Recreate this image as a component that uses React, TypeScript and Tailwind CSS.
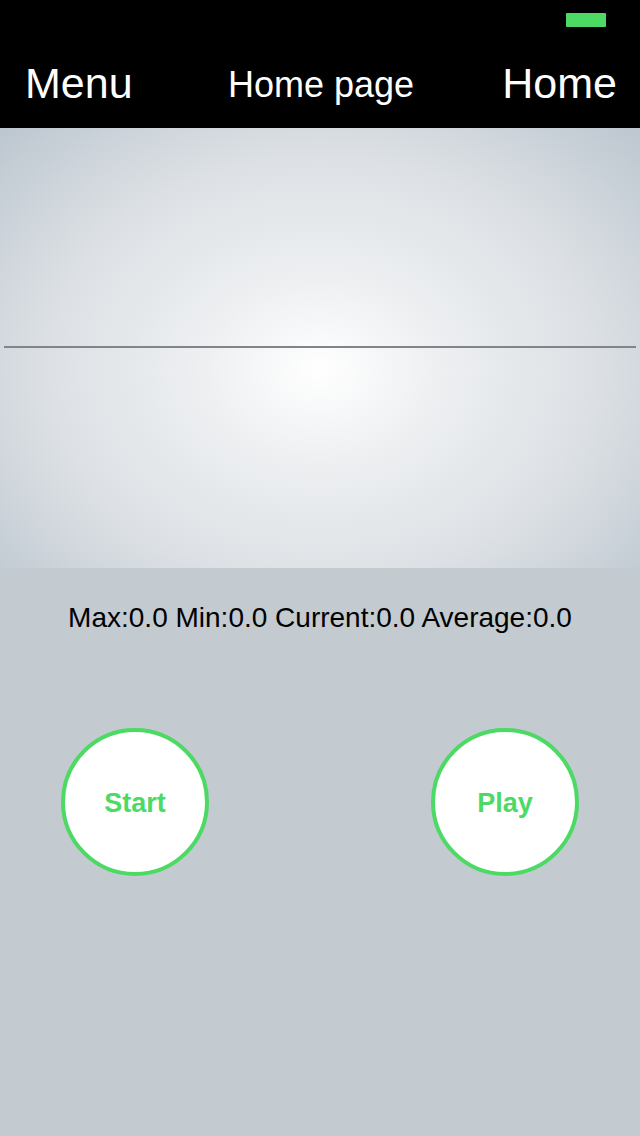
import React from 'react';

const font = { fontFamily: '"Liberation Sans", Arial, sans-serif' };

const CircleButton: React.FC<{ label: string }> = ({ label }) => (
  <button className="w-[148px] h-[148px] rounded-full bg-white border-[4px] border-[#4cd964] flex items-center justify-center text-[27px] font-bold text-[#4cd964] pt-[2px]">
    {label}
  </button>
);

export default function App() {
  return (
    <div className="w-[640px] h-[1136px] flex flex-col bg-[#c3cad0] overflow-hidden" style={font}>
      {/* status + nav bar */}
      <div className="h-[128px] bg-black flex flex-col">
        <div className="h-[40px] flex justify-end pt-[13px] pr-[34px]">
          <div className="w-[40px] h-[14px] bg-[#4cd964] rounded-[1px]" />
        </div>
        <div className="flex-1 flex items-center text-white pb-[2px]">
          <div className="flex-1 pl-[25px] text-[43px] leading-none">Menu</div>
          <div className="text-[36px] leading-none pt-[4px]">Home page</div>
          <div className="flex-1 pr-[23px] text-right text-[43px] leading-none">Home</div>
        </div>
      </div>

      {/* graph area */}
      <div className="h-[440px] flex flex-col justify-center px-[4px] bg-[radial-gradient(ellipse_70%_80%_at_50%_55%,#ffffff_0%,#eef0f2_25%,#dde1e5_60%,#bcc6cf_100%)]">
        <div className="h-[2px] bg-[#818589] translate-y-[-1px]" />
      </div>

      {/* stats */}
      <div className="pt-[36px] text-center text-[28px] leading-none text-black">
        Max:0.0 Min:0.0 Current:0.0 Average:0.0
      </div>

      {/* buttons */}
      <div className="flex justify-between pl-[61px] pr-[61px] mt-[96px]">
        <CircleButton label="Start" />
        <CircleButton label="Play" />
      </div>
    </div>
  );
}
